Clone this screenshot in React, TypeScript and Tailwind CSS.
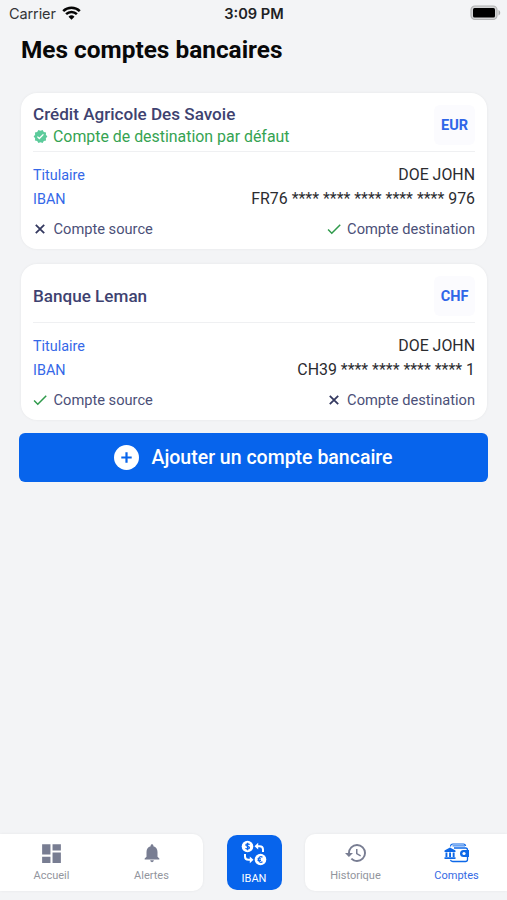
import type { ReactNode } from "react";
import { MdCheck, MdDashboard, MdHistory, MdNotifications, MdVerified } from "react-icons/md";

type Account = {
  bank: string;
  currency: string;
  holder: string;
  iban: string;
  isDefault?: boolean;
  source: boolean;
  destination: boolean;
};

const accounts: Account[] = [
  {
    bank: "Crédit Agricole Des Savoie",
    currency: "EUR",
    holder: "DOE JOHN",
    iban: "FR76 **** **** **** **** **** 976",
    isDefault: true,
    source: false,
    destination: true,
  },
  {
    bank: "Banque Leman",
    currency: "CHF",
    holder: "DOE JOHN",
    iban: "CH39 **** **** **** **** 1",
    source: true,
    destination: false,
  },
];

function StatusBar() {
  return (
    <div className="grid h-7 grid-cols-3 items-center pl-[9px] pr-[6px] font-['Inter',sans-serif]">
      <div className="flex items-center gap-[6px]">
        <span className="text-[14.5px] tracking-[-0.1px] text-[#333437]">Carrier</span>
        <svg className="-mt-0.5" width="19" height="14" viewBox="0 0 19 14" fill="none" stroke="#050505" strokeWidth="2.5">
          <path d="M1.2 5.1a11.8 11.8 0 0 1 16.6 0" />
          <path d="M4.1 8.2a7.6 7.6 0 0 1 10.8 0" />
          <path d="M9.5 13.8 6.5 10.8a4.3 4.3 0 0 1 6 0z" fill="#050505" stroke="none" />
        </svg>
      </div>
      <span className="-ml-[2px] pt-0.5 text-center text-[14.6px] font-semibold text-[#202124]">3:09 PM</span>
      <svg className="-mt-0.5 justify-self-end" width="31" height="16" viewBox="0 0 31 16">
        <rect x="1" y="1" width="26" height="13.5" rx="4" fill="#d4d5d6" stroke="#b2b3b4" strokeWidth="1.2" />
        <rect x="3" y="3" width="22" height="9.5" rx="1.5" fill="#000" />
        <path d="M28.5 5v5.5c2.3-1 2.3-4.5 0-5.5" fill="#a9aaab" />
      </svg>
    </div>
  );
}

function Usage({ enabled, label }: { enabled: boolean; label: string }) {
  return (
    <div className="flex items-center gap-[6.5px]">
      <span className="flex w-[14px] justify-center">
        {enabled ? (
          <MdCheck size={18} className="shrink-0 text-[#2f9a4b]" />
        ) : (
          <svg width="10" height="10" viewBox="0 0 10 10" stroke="#343960" strokeWidth="1.8">
            <path d="m.8.8 8.4 8.4M9.2.8.8 9.2" />
          </svg>
        )}
      </span>
      <span className="pt-0.5 text-[14.65px] text-[#4b5078]">{label}</span>
    </div>
  );
}

function AccountCard({ account }: { account: Account }) {
  return (
    <section className="h-[156px] rounded-2xl bg-white px-3 pt-3 shadow-[0_0_3px_rgba(0,0,0,0.06)]">
      <div className="flex h-[47px] items-start justify-between border-b border-[#eff0f2]">
        <div className="flex h-10 flex-col justify-center">
          <h2 className="text-[17.1px] font-medium leading-[22px] text-[#3e4270]">{account.bank}</h2>
          {account.isDefault && (
            <p className="flex items-center gap-[5px] text-[15.9px] leading-[22px] text-[#35a352]">
              <MdVerified size={15} className="text-[#5ccb9b]" />
              <span className="pt-px">Compte de destination par défaut</span>
            </p>
          )}
        </div>
        <span className="flex h-10 w-[41px] items-center justify-center rounded-md bg-[#fbfbfe] pt-[2px] text-[14.5px] font-bold text-[#2f66e8]">
          {account.currency}
        </span>
      </div>
      <dl className="mt-[10px]">
        <div className="flex h-[25px] items-center justify-between">
          <dt className="pt-0.5 text-[14.4px] text-[#3568e8]">Titulaire</dt>
          <dd className="text-[15.9px] text-[#2b2c30]">{account.holder}</dd>
        </div>
        <div className="flex h-6 items-center justify-between">
          <dt className="pt-0.5 text-[14.4px] text-[#3568e8]">IBAN</dt>
          <dd className="text-[15.9px] text-[#2b2c30]">{account.iban}</dd>
        </div>
      </dl>
      <div className="mt-[6px] flex h-[23px] items-center justify-between">
        <Usage enabled={account.source} label="Compte source" />
        <Usage enabled={account.destination} label="Compte destination" />
      </div>
    </section>
  );
}

function ExchangeIcon() {
  return (
    <svg width="26" height="26" viewBox="0 0 26 26" fill="none">
      <circle cx="6.5" cy="6.5" r="5.8" fill="#fff" />
      <circle cx="19.5" cy="19.5" r="5.8" fill="#fff" />
      <path d="M8.5 4.8c-.5-1.2-3.7-1.3-3.7.3 0 1.7 3.7.9 3.7 2.7 0 1.6-3.3 1.6-3.9.2M6.6 2.8v7.4" stroke="#0764ec" strokeWidth="1.2" />
      <path d="M21.5 17.2c-2-1.5-4 .1-4 2.3s2 3.8 4 2.3M16.5 18.8h3.5M16.5 20.4h3.5" stroke="#0764ec" strokeWidth="1.1" />
      <path d="M16 6.2h2.5c2.200 0 3.500 1.200 3.500 3.300V12M10 19.800H7.500C5.300 19.800 4 18.600 4 16.500V14" stroke="#fff" strokeWidth="2" />
      <path d="m17.2 2.8-3.7 3.4 3.7 3.4zM8.8 16.4l3.7 3.4-3.7 3.4z" fill="#fff" />
    </svg>
  );
}

function BankWalletIcon() {
  return (
    <svg width="26" height="20" viewBox="0 0 26 20" fill="none" stroke="#0d68e8">
      <path d="M6.5 3.5C6.5 2 7.5 1 9 1h10.5c1.3 0 2 .8 2.2 2" strokeWidth="1.1" />
      <path d="M8.5 2.9H21" strokeWidth="1" />
      <path d="M10 5h11.5c1.3 0 2 .8 2 2v1.5M23.5 13v3.5c0 1.200-.8 2-2 2H8.700c-1.200 0-2-.6-2.200-1.600" strokeWidth="1.3" />
      <path d="M19.5 7H25v7h-5.5a3.500 3.500 0 0 1 0-7z" fill="#0d68e8" stroke="none" />
      <circle cx="20" cy="10.5" r="1.6" fill="#fff" stroke="none" />
      <path d="M.5 7.5 6 4.5l5.5 3V9H.5zM1.5 9.5h1.900V14H1.500zM5.100 9.500H7V14H5.100zM8.700 9.500h1.900V14H8.700zM.5 14.300h11V16H.5z" fill="#0d68e8" stroke="none" />
    </svg>
  );
}

function NavItem({ icon, label, active }: { icon: ReactNode; label: string; active?: boolean }) {
  return (
    <a className={`flex w-[101px] flex-col items-center ${active ? "text-[#346ae4]" : "text-[#787d92]"}`}>
      <span className="flex h-6 items-center">{icon}</span>
      <span className={`mt-[3px] text-[11px] leading-4 ${active ? "" : "text-[#92959d]"}`}>{label}</span>
    </a>
  );
}

export default function App() {
  return (
    <div className="flex h-[900px] w-[507px] flex-col overflow-hidden bg-[#f3f4f6] font-['Roboto',sans-serif] text-base">
      <StatusBar />
      <h1 className="h-[65px] pl-[21px] pt-[7px] text-[24.4px] font-bold leading-[30px] text-[#080809]">
        Mes comptes bancaires
      </h1>

      <main className="flex flex-1 flex-col px-5">
        <div className="flex flex-col gap-[15px] pl-px">
          {accounts.map((account) => (
            <AccountCard key={account.bank} account={account} />
          ))}
        </div>
        <button
          type="button"
          className="-mx-px mt-[13px] flex h-[49px] items-center justify-center gap-3 rounded-md bg-[#0764ec] text-white"
        >
          <svg width="25" height="25" viewBox="0 0 25 25">
            <circle cx="12.5" cy="12.5" r="12.5" fill="#fff" />
            <path d="M12.5 7.3v10.4M7.3 12.5h10.4" stroke="#0764ec" strokeWidth="2.2" />
          </svg>
          <span className="pt-px text-[19.5px] font-medium">Ajouter un compte bancaire</span>
        </button>
      </main>

      <nav className="mb-[9px] flex h-[57px] items-stretch justify-between">
        <div className="flex w-[203px] rounded-r-[10px] bg-white pl-px pt-[7px] shadow-[0_0_3px_rgba(0,0,0,0.06)]">
          <NavItem icon={<MdDashboard size={25} />} label="Accueil" />
          <div className="-ml-px">
            <NavItem icon={<MdNotifications size={22} />} label="Alertes" />
          </div>
        </div>
        <a className="mt-px flex h-[55px] w-[55px] flex-col items-center rounded-[10px] bg-[#0764ec] pt-[5px] text-white">
          <ExchangeIcon />
          <span className="mt-[5px] text-[11px] leading-4">IBAN</span>
        </a>
        <div className="flex w-[202px] rounded-l-[10px] bg-white pt-[7px] shadow-[0_0_3px_rgba(0,0,0,0.06)]">
          <NavItem icon={<MdHistory size={24} />} label="Historique" />
          <NavItem icon={<BankWalletIcon />} label="Comptes" active />
        </div>
      </nav>
    </div>
  );
}
